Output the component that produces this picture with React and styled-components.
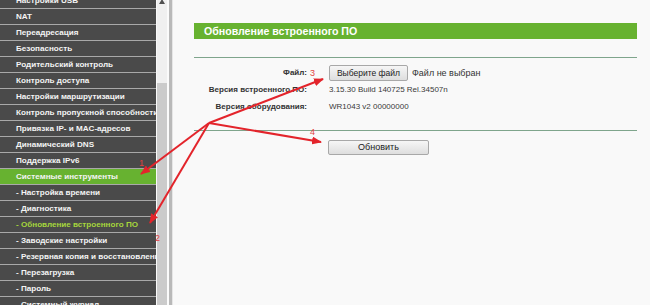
import React from 'react'
import styled, { createGlobalStyle } from 'styled-components'

const GlobalStyle = createGlobalStyle`
    html, body {
        margin: 0;
        padding: 0;
        background: #f9f9f9;
    }
    #root {
        width: 650px;
        height: 305px;
        overflow: hidden;
    }
`

const Page = styled.div`
    position: relative;
    display: flex;
    width: 650px;
    height: 305px;
    overflow: hidden;
    font-family: "Liberation Sans", Arial, sans-serif;
`

const Sidebar = styled.div`
    display: flex;
    flex: 0 0 171px;
    height: 100%;
`

const Menu = styled.ul`
    list-style: none;
    margin: -7px 0 0;
    padding: 0;
    width: 156px;
    background: #4a4a4a;
    overflow: hidden;
`

const MenuItem = styled.li`
    height: 15px;
    line-height: 15px;
    border-bottom: 1px solid #a9a9a9;
    padding-left: 16px;
    font-size: 8.1px;
    font-weight: bold;
    white-space: nowrap;
    overflow: hidden;
    color: ${p => (p.$current ? '#a6d63c' : '#f4f4f4')};
    background: ${p => (p.$active ? '#67b230' : '#4a4a4a')};
`

const ScrollBar = styled.div`
    display: flex;
    flex-direction: column;
    width: 10px;
    background: #f0f0f0;
    border-left: 1px solid #fafafa;
`

const ScrollArrow = styled.div`
    height: 4px;
    overflow: hidden;
    display: flex;
    justify-content: center;

    &::before {
        content: '';
        margin-top: -3px;
        border-left: 3px solid transparent;
        border-right: 3px solid transparent;
        border-bottom: 5px solid #505050;
    }
`

const ScrollTrack = styled.div`
    height: 79px;
`

const ScrollThumb = styled.div`
    flex: 1;
    background: #cbcbcb;
`

const FrameGap = styled.div`
    width: 2px;
    background: #fbfbfb;
`

const FrameBorder = styled.div`
    width: 3px;
    background: #b9b9b9;
    border-right: 1px solid #e6e6e6;
`

const Main = styled.div`
    flex: 1;
    background: #f9f9f9;
    padding: 23px 13px 0 21px;
`

const TitleBar = styled.div`
    height: 16px;
    line-height: 16px;
    background: #67b230;
    color: #fff;
    font-size: 10.6px;
    font-weight: bold;
    padding-left: 10px;
`

const Rule = styled.div`
    height: 1px;
    background: #7fa58c;
    margin-top: ${p => p.$top}px;
`

const Form = styled.div`
    display: grid;
    grid-template-columns: 113px 1fr;
    grid-auto-rows: 17px;
    column-gap: 22px;
    align-items: center;
    margin-top: 6px;
`

const Label = styled.div`
    text-align: right;
    font-size: 8px;
    font-weight: bold;
    color: #333;
    white-space: nowrap;
`

const Value = styled.div`
    display: flex;
    align-items: center;
    gap: 4px;
    font-size: 8px;
    color: #3a3a3a;
    white-space: nowrap;
`

const FileNote = styled.span`
    font-size: 9px;
    color: #333;
`

const Button = styled.button`
    height: ${p => p.$h}px;
    width: ${p => p.$w}px;
    padding: 0;
    border: 1px solid #a8a8a8;
    border-radius: 2px;
    background: linear-gradient(#f6f6f6, #dedede);
    font-family: "Liberation Sans", Arial, sans-serif;
    font-size: ${p => p.$fs}px;
    color: #222;
`

const Actions = styled.div`
    padding: 5px 0 0 134px;
`

const Overlay = styled.svg`
    position: absolute;
    left: 0;
    top: 0;
    pointer-events: none;
`

const menu = [
    { t: 'Настройки USB' },
    { t: 'NAT' },
    { t: 'Переадресация' },
    { t: 'Безопасность' },
    { t: 'Родительский контроль' },
    { t: 'Контроль доступа' },
    { t: 'Настройки маршрутизации' },
    { t: 'Контроль пропускной способности' },
    { t: 'Привязка IP- и MAC-адресов' },
    { t: 'Динамический DNS' },
    { t: 'Поддержка IPv6' },
    { t: 'Системные инструменты', active: true },
    { t: '- Настройка времени' },
    { t: '- Диагностика' },
    { t: '- Обновление встроенного ПО', current: true },
    { t: '- Заводские настройки' },
    { t: '- Резервная копия и восстановление' },
    { t: '- Перезагрузка' },
    { t: '- Пароль' },
    { t: '- Системный журнал' },
]

// red annotation arrows, all from one point
const origin = [209, 123]
const arrows = [
    { to: [141, 174], n: '1', at: [139, 166] },
    { to: [150, 223], n: '2', at: [155, 241] },
    { to: [323, 79], n: '3', at: [310, 76] },
    { to: [321, 142], n: '4', at: [310, 135] },
]

export default function App() {
    return (
        <Page>
            <GlobalStyle />
            <Sidebar>
                <Menu>
                    {menu.map(m => (
                        <MenuItem key={m.t} $active={m.active} $current={m.current}>{m.t}</MenuItem>
                    ))}
                </Menu>
                <ScrollBar>
                    <ScrollArrow />
                    <ScrollTrack />
                    <ScrollThumb />
                </ScrollBar>
                <FrameGap />
                <FrameBorder />
            </Sidebar>
            <Main>
                <TitleBar>Обновление встроенного ПО</TitleBar>
                <Rule $top={18} />
                <Form>
                    <Label>Файл:</Label>
                    <Value>
                        <Button $w={79} $h={16} $fs={8.5}>Выберите файл</Button>
                        <FileNote>Файл не выбран</FileNote>
                    </Value>
                    <Label>Версия встроенного ПО:</Label>
                    <Value>3.15.30 Build 140725 Rel.34507n</Value>
                    <Label>Версия оборудования:</Label>
                    <Value>WR1043 v2 00000000</Value>
                </Form>
                <Rule $top={15} />
                <Actions>
                    <Button $w={101} $h={15} $fs={9}>Обновить</Button>
                </Actions>
            </Main>
            <Overlay width="650" height="305" viewBox="0 0 650 305">
                <defs>
                    <marker id="head" markerUnits="userSpaceOnUse" markerWidth="10" markerHeight="8" refX="9" refY="4" orient="auto">
                        <path d="M0,0 L10,4 L0,8 z" fill="#e3242b" />
                    </marker>
                </defs>
                {arrows.map(a => (
                    <g key={a.n}>
                        <line x1={origin[0]} y1={origin[1]} x2={a.to[0]} y2={a.to[1]} stroke="#e3242b" strokeWidth="2" markerEnd="url(#head)" />
                        <text x={a.at[0]} y={a.at[1]} fontSize="9" fill="#e2403f" fontFamily="Liberation Sans, Arial, sans-serif">{a.n}</text>
                    </g>
                ))}
            </Overlay>
        </Page>
    )
}
